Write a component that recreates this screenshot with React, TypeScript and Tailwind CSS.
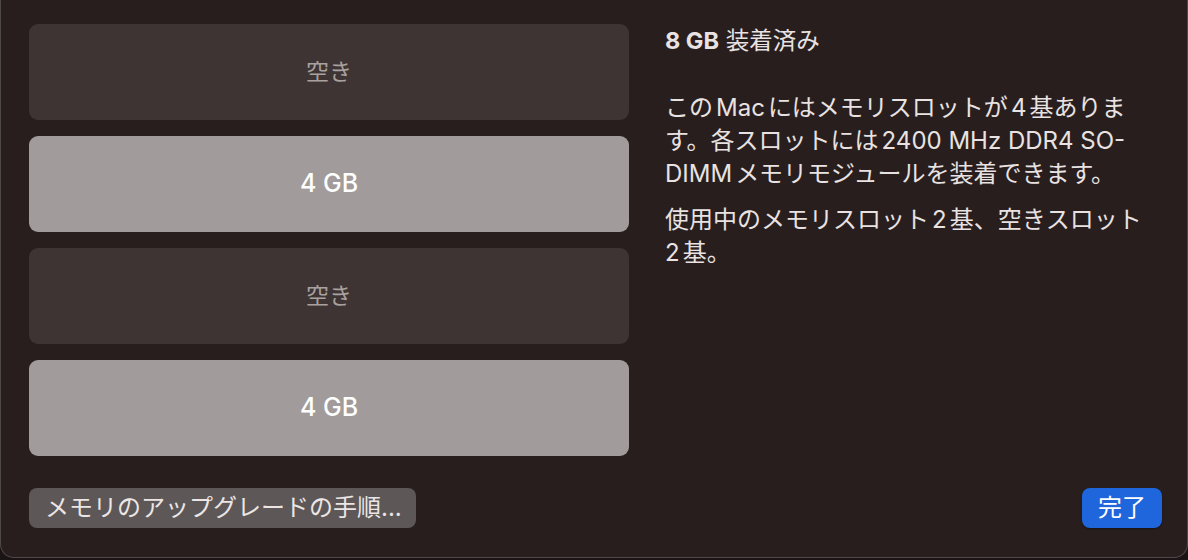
import React from 'react';

const SLOTS = [
  { filled: false, label: '空き' },
  { filled: true, label: '4 GB' },
  { filled: false, label: '空き' },
  { filled: true, label: '4 GB' },
];

const Slot = ({ filled, label }: { filled: boolean; label: string }) => (
  <div
    className={
      filled
        ? 'h-[96px] rounded-[9px] bg-[#a19b9b] flex items-center justify-center text-[25px] font-medium text-white'
        : 'h-[96px] rounded-[9px] bg-[#3d3433] flex items-center justify-center text-[23px] text-[#a8a1a0]'
    }
  >
    {label}
  </div>
);

// latin runs inside japanese text get a little breathing room, like macOS does
const L = ({ children }: { children: React.ReactNode }) => <span className="mx-[3px]">{children}</span>;

export default function App() {
  return (
    <div className="w-full h-[560px] bg-[#1b1414] font-[Inter,'Noto_Sans_CJK_JP',sans-serif]">
      <div className="h-[558px] bg-[#281e1e] rounded-b-[14px] border-b border-x border-[#4f4848] flex flex-col">
        <div className="flex pt-6 pl-7">
          {/* memory slots */}
          <div className="w-[600px] flex flex-col gap-4">
            {SLOTS.map((s, i) => (
              <Slot key={i} filled={s.filled} label={s.label} />
            ))}
          </div>

          {/* details */}
          <div className="ml-[36px] pt-[1px] text-[#e8e3e2]">
            <h2 className="text-[23.5px] leading-[32px] whitespace-nowrap">
              <span className="font-bold">8 GB</span> 装着済み
            </h2>
            <p className="mt-[34px] text-[24px] leading-[33px] whitespace-nowrap">
              この<L>Mac</L>にはメモリスロットが<L>4</L>基ありま
              <br />
              す。各スロットには<L>2400 MHz DDR4 SO-</L>
              <br />
              DIMM<span className="ml-[3px]">メモリモジュールを装着できます。</span>
            </p>
            <p className="mt-[13px] text-[24px] leading-[33px] whitespace-nowrap">
              使用中のメモリスロット<L>2</L>基、空きスロット
              <br />
              2<span className="ml-[3px]">基。</span>
            </p>
          </div>
        </div>

        {/* footer buttons */}
        <div className="mt-auto mb-[29px] pl-7 pr-[25px] flex items-center justify-between">
          <button className="h-[40px] w-[387px] rounded-[8px] bg-[#5d5757] text-[#ebe6e5] text-[24px] text-left pl-[16px] whitespace-nowrap">
            メモリのアップグレードの手順...
          </button>
          <button className="h-[40px] w-[80px] rounded-[8px] bg-[#1f65dc] text-white text-[24px] shadow-[0_1px_2px_rgba(0,0,0,0.4)]">
            完了
          </button>
        </div>
      </div>
    </div>
  );
}
